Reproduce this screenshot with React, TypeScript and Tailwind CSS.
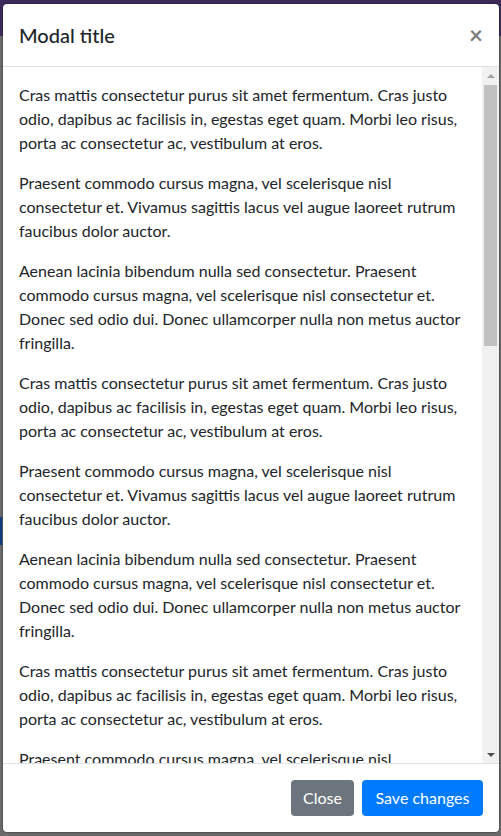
const P1 = [
  "Cras mattis consectetur purus sit amet fermentum. Cras justo",
  "odio, dapibus ac facilisis in, egestas eget quam. Morbi leo risus,",
  "porta ac consectetur ac, vestibulum at eros.",
];
const P2 = [
  "Praesent commodo cursus magna, vel scelerisque nisl",
  "consectetur et. Vivamus sagittis lacus vel augue laoreet rutrum",
  "faucibus dolor auctor.",
];
const P3 = [
  "Aenean lacinia bibendum nulla sed consectetur. Praesent",
  "commodo cursus magna, vel scelerisque nisl consectetur et.",
  "Donec sed odio dui. Donec ullamcorper nulla non metus auctor",
  "fringilla.",
];
const PARAGRAPHS = [P1, P2, P3, P1, P2, P3, P1, P2, P3];

function Scrollbar() {
  return (
    <div className="flex w-[17px] shrink-0 flex-col bg-[#f1f1f1]">
      <div className="flex h-[17px] items-center justify-center">
        <div className="h-0 w-0 border-x-[4px] border-b-[4px] border-x-transparent border-b-[#a3a3a3]" />
      </div>
      <div className="flex-1 px-[2px] pt-px">
        <div className="h-[261px] bg-[#c1c1c1]" />
      </div>
      <div className="flex h-[17px] items-center justify-center">
        <div className="h-0 w-0 border-x-[4px] border-t-[4px] border-x-transparent border-t-[#505050]" />
      </div>
    </div>
  );
}

export default function App() {
  return (
    <div className="relative h-[836px] overflow-hidden bg-[#696969] font-['Lato',sans-serif]">
      {/* dimmed page behind the backdrop */}
      <div className="h-[36px] bg-[#3b2958]" />
      <div className="mt-[481px] h-[28px] w-[2px] bg-[#0d3d85]" />

      <div className="absolute inset-0 flex pb-[3px] pl-[2px] pr-px pt-[3px]">
        <div className="flex w-full flex-col rounded-[5px] border border-black/20 bg-white bg-clip-padding text-[#212529]">
          <div className="flex items-start justify-between border-b border-[#dee2e6] p-4">
            <h5 className="text-[20px] font-medium leading-[30px]">Modal title</h5>
            <button
              type="button"
              aria-label="Close"
              className="-m-4 px-4 pb-4 pt-[19px] text-[24px] font-bold leading-none text-black opacity-50"
            >
              ×
            </button>
          </div>

          <div className="flex min-h-0 flex-1">
            <div className="flex-1 overflow-hidden p-4 text-[16px] leading-6">
              {PARAGRAPHS.map((lines, i) => (
                <p key={i} className="mb-4">
                  {lines.map((line) => (
                    <span key={line} className="block whitespace-nowrap">
                      {line}
                    </span>
                  ))}
                </p>
              ))}
            </div>
            <Scrollbar />
          </div>

          <div className="flex items-center justify-end border-t border-[#dee2e6] p-3">
            <button
              type="button"
              className="m-1 w-[63px] rounded-[4px] bg-[#6c757d] py-1.5 text-center text-[16px] leading-6 text-white"
            >
              Close
            </button>
            <button
              type="button"
              className="m-1 w-[121px] rounded-[4px] bg-[#007bff] py-1.5 text-center text-[16px] leading-6 text-white"
            >
              Save changes
            </button>
          </div>
        </div>
      </div>
    </div>
  );
}
